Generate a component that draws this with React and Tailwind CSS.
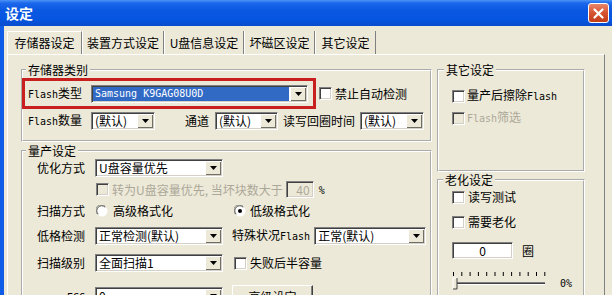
import React from 'react';
import clsx from 'clsx';

const sunken =
  'border border-t-[#808080] border-l-[#808080] border-b-white border-r-white shadow-[inset_1px_1px_0_#404040,inset_-1px_-1px_0_#d4d0c8]';

function Mono({ children, className }) {
  return <span className={clsx("font-['DejaVu_Sans_Mono',monospace] text-[10px]", className)}>{children}</span>;
}

function Arrow() {
  return (
    <svg width="7" height="4" viewBox="0 0 7 4">
      <path d="M0 0h7L3.5 4z" fill="#000" />
    </svg>
  );
}

function Combo({ className, selected, children }) {
  return (
    <div className={clsx('flex h-[18px] shrink-0 bg-white p-[1px]', sunken, className)}>
      <div
        className={clsx(
          'flex-1 min-w-0 flex items-center pl-[2px] mr-[1px] whitespace-nowrap leading-[14px]',
          selected && 'bg-[#316ac5] text-white'
        )}
      >
        {children}
      </div>
      <div className="w-[16px] shrink-0 flex items-center justify-center bg-[#ece9d8] shadow-[inset_1px_1px_0_#fff,inset_-1px_-1px_0_#716f64]">
        <Arrow />
      </div>
    </div>
  );
}

function Check({ disabled }) {
  return <span className={clsx('block w-[13px] h-[13px] shrink-0', sunken, disabled ? 'bg-[#ece9d8]' : 'bg-white')} />;
}

function Radio({ checked }) {
  return (
    <svg width="12" height="12" viewBox="0 0 12 12" className="shrink-0">
      <circle cx="6" cy="6" r="5.5" fill="#fff" />
      <path d="M1.3 9.2A5.3 5.3 0 0 1 9.2 1.3" stroke="#9a9a90" fill="none" />
      <path d="M2.2 9.2A4.4 4.4 0 0 1 9.2 2.2" stroke="#505050" fill="none" />
      {checked && <circle cx="6" cy="6" r="2" fill="#000" />}
    </svg>
  );
}

function Group({ title, className, legendClass, children }) {
  return (
    <fieldset className={clsx('border-2 border-white [border-style:groove]', className)}>
      <legend className={clsx('px-[2px] leading-[16px]', legendClass)}>{title}</legend>
      {children}
    </fieldset>
  );
}

const tabs = [
  { label: '存储器设定', w: 'w-[75px]', active: true },
  { label: '装置方式设定', w: 'w-[82px]' },
  { label: 'U盘信息设定', w: 'w-[80px]' },
  { label: '坏磁区设定', w: 'w-[71px]' },
  { label: '其它设定', w: 'w-[61px]' },
];

function Slider() {
  const ticks = Array.from({ length: 12 }, (_, i) => 1.5 + i * 8.3);
  return (
    <svg width="94" height="20" viewBox="0 0 94 20" className="shrink-0">
      {ticks.map((x, i) => (
        <line key={i} x1={x} x2={x} y1="1" y2="5" stroke="#000" strokeWidth="1" />
      ))}
      <line x1="1" x2="93" y1="11.5" y2="11.5" stroke="#808080" />
      <line x1="1" x2="93" y1="12.5" y2="12.5" stroke="#404040" />
      <line x1="1" x2="93" y1="13.5" y2="13.5" stroke="#fff" />
      <path d="M1 7h4v11H1z" fill="#ece9d8" />
      <path d="M1 18V7h4" stroke="#fff" fill="none" />
      <path d="M5 7v11H1" stroke="#404040" fill="none" />
    </svg>
  );
}

export default function App() {
  return (
    <div className="w-[612px] h-[295px] overflow-hidden bg-[#ece9d8] flex flex-col font-['Noto_Sans_CJK_SC','Liberation_Sans',sans-serif] text-[12px] leading-[16px] text-black">
      {/* title bar */}
      <div className="h-[26px] shrink-0 flex items-center justify-between pl-[5px] pr-[3px] bg-[linear-gradient(180deg,#4a94f6_0%,#1c67eb_12%,#0a58e2_40%,#0655e0_75%,#0a4ccc_100%)]">
        <span className="text-white font-bold text-[14px] leading-[16px]">设定</span>
        <div className="w-[21px] h-[20px] rounded-[3px] border border-white bg-[linear-gradient(180deg,#e8866a,#d6532f_50%,#c23c18)] flex items-center justify-center">
          <svg width="11" height="11" viewBox="0 0 11 11">
            <path d="M1.5 1.5l8 8M9.5 1.5l-8 8" stroke="#fff" strokeWidth="2.2" strokeLinecap="round" />
          </svg>
        </div>
      </div>

      <div className="flex-1 flex flex-col border-l-4 border-l-[#0f5ce8] pl-[3px] pt-[5px]">
        {/* tabs */}
        <div className="flex h-[23px] shrink-0">
          {tabs.map((t) => (
            <div
              key={t.label}
              className={clsx(
                'flex items-center justify-center border-l border-l-white border-r border-r-[#808080] whitespace-nowrap',
                t.w,
                t.active && 'border-t border-t-white'
              )}
            >
              {t.label}
            </div>
          ))}
        </div>

        {/* tab panel */}
        <div className="flex-1 w-[598px] flex gap-[5px] border-t border-t-white border-l border-l-white border-r border-r-[#808080] pl-[13px] pt-[7px]">
          {/* left column */}
          <div className="w-[411px] shrink-0 flex flex-col">
            <Group title="存储器类别" legendClass="ml-[3px]" className="pb-[10px]">
              <div className="flex items-center">
                <div className="-ml-[1px] w-[294px] h-[31px] border-[3px] border-[#c8201f] flex items-center pl-[3px]">
                  <span className="w-[63px] shrink-0">
                    <Mono>Flash</Mono>类型
                  </span>
                  <Combo className="w-[217px]" selected>
                    <Mono>Samsung K9GAG08U0D</Mono>
                  </Combo>
                </div>
                <div className="ml-[3px] flex items-center gap-[3px]">
                  <Check />
                  <span>禁止自动检测</span>
                </div>
              </div>
              <div className="flex items-center mt-[3px] pl-[5px] h-[18px]">
                <span className="w-[63px] shrink-0">
                  <Mono>Flash</Mono>数量
                </span>
                <Combo className="w-[64px]">(默认)</Combo>
                <span className="ml-[30px]">通道</span>
                <Combo className="w-[63px] ml-[6px]">(默认)</Combo>
                <span className="ml-[5px]">读写回圈时间</span>
                <Combo className="w-[64px] ml-[5px]">(默认)</Combo>
              </div>
            </Group>

            <Group title="量产设定" legendClass="ml-[3px]" className="mt-[1px] pb-[20px]">
              <div className="flex items-center h-[18px]">
                <span className="w-[62px] shrink-0 text-right">优化方式</span>
                <Combo className="w-[128px] ml-[10px]">U盘容量优先</Combo>
              </div>
              <div className="flex items-center h-[17px] mt-[4px] text-[#aca899]">
                <span className="ml-[73px]">
                  <Check disabled />
                </span>
                <span className="ml-[3px]">转为U盘容量优先, 当坏块数大于</span>
                <div className={clsx('ml-[3px] w-[28px] h-[17px] flex items-center justify-end pr-[3px] bg-[#ece9d8]', sunken)}>
                  40
                </div>
                <span className="ml-[5px] text-black">
                  <Mono>%</Mono>
                </span>
              </div>
              <div className="flex items-center h-[16px] mt-[5px]">
                <span className="w-[62px] shrink-0 text-right">扫描方式</span>
                <span className="ml-[11px] flex items-center gap-[5px]">
                  <Radio />
                  高级格式化
                </span>
                <span className="ml-[61px] flex items-center gap-[4px]">
                  <Radio checked />
                  低级格式化
                </span>
              </div>
              <div className="flex items-center h-[18px] mt-[8px]">
                <span className="w-[62px] shrink-0 text-right">低格检测</span>
                <Combo className="w-[128px] ml-[10px]">正常检测(默认)</Combo>
                <span className="ml-[9px]">
                  特殊状况<Mono>Flash</Mono>
                </span>
                <Combo className="w-[112px] ml-[4px]">正常(默认)</Combo>
              </div>
              <div className="flex items-center h-[18px] mt-[9px]">
                <span className="w-[62px] shrink-0 text-right">扫描级别</span>
                <Combo className="w-[128px] ml-[10px]">全面扫描1</Combo>
                <span className="ml-[11px] flex items-center gap-[3px]">
                  <Check />
                  失败后半容量
                </span>
              </div>
              <div className="flex items-start mt-[13px]">
                <span className="w-[62px] shrink-0 text-right mt-[3px]">
                  <Mono>ECC</Mono>
                </span>
                <Combo className="w-[128px] ml-[10px] mt-[2px]">0</Combo>
                <div className="ml-[9px] w-[81px] h-[23px] flex items-center justify-center bg-[#ece9d8] border border-t-white border-l-white border-r-[#404040] border-b-[#404040] shadow-[inset_-1px_-1px_0_#808080]">
                  高级设定
                </div>
              </div>
            </Group>
          </div>

          {/* right column */}
          <div className="w-[148px] shrink-0 flex flex-col">
            <Group title="其它设定" legendClass="ml-[5px]" className="h-[110px]">
              <div className="flex items-center h-[16px] mt-[10px] pl-[13px] gap-[2px]">
                <Check />
                <span>
                  量产后擦除<Mono>Flash</Mono>
                </span>
              </div>
              <div className="flex items-center h-[16px] mt-[6px] pl-[13px] gap-[2px] text-[#aca899]">
                <Check disabled />
                <span>
                  <Mono>Flash</Mono>筛选
                </span>
              </div>
            </Group>

            <Group title="老化设定" legendClass="ml-[4px]" className="pb-[20px]">
              <div className="flex items-center h-[16px] mt-[1px] pl-[13px] gap-[3px]">
                <Check />
                <span>读写测试</span>
              </div>
              <div className="flex items-center h-[16px] mt-[9px] pl-[13px] gap-[3px]">
                <Check />
                <span>需要老化</span>
              </div>
              <div className="flex items-center h-[17px] mt-[12px] pl-[13px]">
                <div className={clsx('w-[61px] h-[17px] flex items-center justify-center bg-white', sunken)}>0</div>
                <span className="ml-[9px]">圈</span>
              </div>
              <div className="flex items-center mt-[10px] pl-[13px]">
                <Slider />
                <span className="ml-[14px] mt-[5px]">
                  <Mono>0%</Mono>
                </span>
              </div>
            </Group>
          </div>
        </div>
      </div>
    </div>
  );
}
